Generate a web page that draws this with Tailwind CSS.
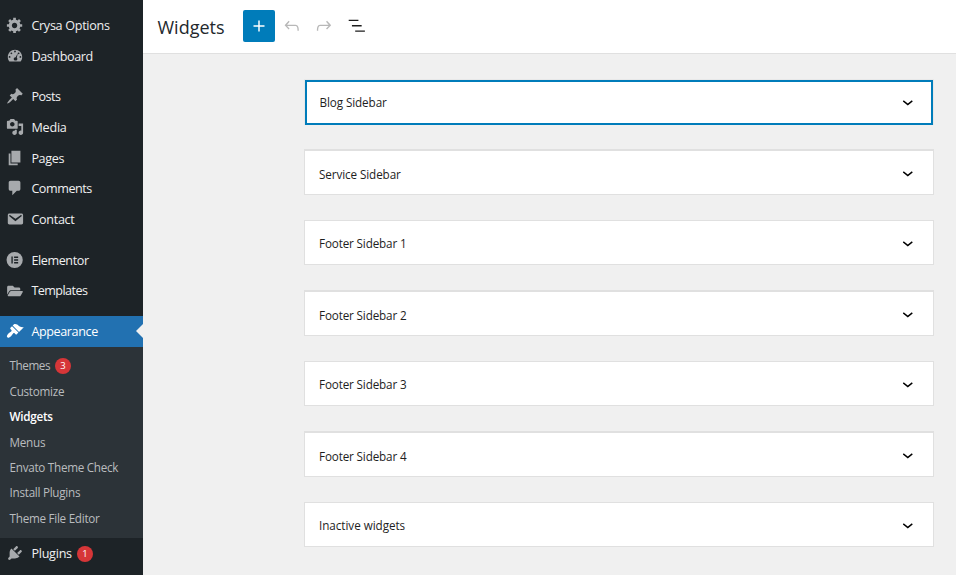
<!DOCTYPE html>
<html lang="en">
<head>
<meta charset="utf-8">
<title>Widgets</title>
<script src="https://cdn.jsdelivr.net/npm/@tailwindcss/browser@4"></script>
</head>
<body class="flex h-[575px] w-[956px] overflow-hidden bg-[#f0f0f0] font-['Open_Sans','Noto_Sans',sans-serif] text-[#1e1e1e]">
<aside class="flex h-full w-[143px] shrink-0 flex-col bg-[#1d2327] pt-[10px] text-[12.6px] tracking-[-0.35px] text-[#f0f0f1]">
  <nav class="flex flex-col">
    <a class="flex h-[31px] items-center gap-[7px] pl-[6.4px]"><svg class="mb-[2px] size-[18px] fill-[#a7aaad]" viewBox="0 0 20 20"><path d="M18 12h-2.18c-.17.7-.44 1.35-.81 1.93l1.54 1.54-2.1 2.1-1.54-1.54c-.58.36-1.23.63-1.91.79V19H8v-2.18c-.68-.16-1.33-.43-1.91-.79l-1.54 1.54-2.12-2.12 1.54-1.54c-.36-.58-.63-1.23-.79-1.91H1V9.03h2.17c.16-.7.44-1.35.8-1.94L2.43 5.55l2.1-2.1 1.54 1.54c.58-.37 1.24-.64 1.93-.81V2h3v2.18c.68.16 1.33.43 1.91.79l1.54-1.54 2.12 2.12-1.54 1.54c.36.59.64 1.24.8 1.94H18V12zm-8.5 1.5c1.66 0 3-1.34 3-3s-1.34-3-3-3-3 1.34-3 3 1.34 3 3 3z"/></svg><span class="pt-[1px] tracking-[-0.3px]">Crysa Options</span></a>
    <a class="flex h-[31px] items-center gap-[7px] pl-[6.4px]"><svg class="mb-[2px] size-[18px] fill-[#a7aaad]" viewBox="0 0 20 20"><path fill-rule="evenodd" d="M3.76 16h12.48c1.1-1.37 1.76-3.11 1.76-5 0-4.42-3.58-8-8-8s-8 3.58-8 8c0 1.89.66 3.63 1.76 5zM10 4c.55 0 1 .45 1 1s-.45 1-1 1-1-.45-1-1 .45-1 1-1zM6 6c.55 0 1 .45 1 1s-.45 1-1 1-1-.45-1-1 .45-1 1-1zm8 0c.55 0 1 .45 1 1s-.45 1-1 1-1-.45-1-1 .45-1 1-1zM4 10c.55 0 1 .45 1 1s-.45 1-1 1-1-.45-1-1 .45-1 1-1zm12 0c.55 0 1 .45 1 1s-.45 1-1 1-1-.45-1-1 .45-1 1-1zM13.2 6.6l-1.2 5.3c.4.35.6.8.6 1.3 0 1-.9 1.8-2 1.8s-2-.8-2-1.8 .9-1.9 2.1-1.8z"/></svg><span class="pt-[1px] tracking-[-0.4px]">Dashboard</span></a>
  </nav>
  <nav class="mt-[9px] flex flex-col">
    <a class="flex h-[31px] items-center gap-[7px] pl-[6.4px]"><svg class="mb-[2px] size-[18px] fill-[#a7aaad]" viewBox="0 0 20 20"><path d="M10.44 3.02l1.82-1.82 6.36 6.35-1.83 1.82c-1.05-.68-2.48-.57-3.41.36l-.75.75c-.92.93-1.04 2.35-.35 3.41l-1.83 1.82-2.41-2.41-2.8 2.79c-.42.42-3.38 2.71-3.8 2.29s1.86-3.39 2.28-3.81l2.79-2.79L4.1 9.36l1.83-1.82c1.05.69 2.48.57 3.4-.36l.75-.75c.93-.92 1.05-2.35.36-3.41z"/></svg><span class="pt-[1px] tracking-[-0.5px]">Posts</span></a>
    <a class="flex h-[31px] items-center gap-[7px] pl-[6.4px]"><svg class="mb-[2px] size-[18px] fill-[#a7aaad]" viewBox="0 0 20 20"><path fill-rule="evenodd" d="M13 11V4c0-.55-.45-1-1-1h-1.67L9 1H5L3.67 3H2c-.55 0-1 .45-1 1v7c0 .55.45 1 1 1h10c.55 0 1-.45 1-1zM7 4.5c1.38 0 2.5 1.12 2.5 2.5S8.38 9.5 7 9.5 4.5 8.38 4.5 7 5.62 4.5 7 4.5zM14 6h5v10.5c0 1.38-1.12 2.5-2.5 2.5S14 17.88 14 16.5s1.12-2.5 2.5-2.5c.17 0 .34.02.5.05V9h-3V6zm-4 8.05V13h2v3.5c0 1.38-1.12 2.5-2.5 2.5S7 17.88 7 16.5 8.12 14 9.5 14c.17 0 .34.02.5.05z"/></svg><span class="pt-[1px] tracking-[-0.2px]">Media</span></a>
    <a class="flex h-[31px] items-center gap-[7px] pl-[6.4px]"><svg class="mb-[2px] size-[18px] fill-[#a7aaad]" viewBox="0 0 20 20"><path d="M6 15V2h10v13H6zm-1 1h8v2H3V5h2v11z"/></svg><span class="pt-[1px]">Pages</span></a>
    <a class="flex h-[30px] items-center gap-[7px] pl-[6.4px]"><svg class="mb-[2px] size-[18px] fill-[#a7aaad]" viewBox="0 0 20 20"><path d="M5 2h9c1.1 0 2 .9 2 2v7c0 1.1-.9 2-2 2h-2l-5 5v-5H5c-1.1 0-2-.9-2-2V4c0-1.1.9-2 2-2z"/></svg><span class="tracking-[-0.45px]">Comments</span></a>
    <a class="flex h-[31px] items-center gap-[7px] pl-[6.4px]"><svg class="mb-[2px] size-[18px] fill-[#a7aaad]" viewBox="0 0 20 20"><path d="M3.87 4h13.25C18.37 4 19 4.59 19 5.79v8.42c0 1.19-.63 1.79-1.88 1.79H3.87c-1.25 0-1.88-.6-1.88-1.79V5.79c0-1.2.63-1.79 1.88-1.79zm6.62 8.6l6.74-5.53c.24-.2.43-.66.13-1.07-.29-.41-.82-.42-1.17-.17l-5.7 3.86L4.8 5.83c-.35-.25-.88-.24-1.17.17-.3.41-.11.87.13 1.07z"/></svg><span class="pt-[1px] tracking-[-0.3px]">Contact</span></a>
  </nav>
  <nav class="mt-[10px] flex flex-col">
    <a class="flex h-[31px] items-center gap-[7px] pl-[6.4px]"><svg class="mb-[2px] size-[18px]" viewBox="0 0 20 20"><circle cx="9.6" cy="10" r="9" fill="#a7aaad"/><path fill="#1d2327" d="M6 6.2h1.5v7.6H6zM9 6.2h4.5v1.5H9zM9 9.25h4.5v1.5H9zM9 12.3h4.5v1.5H9z"/></svg><span class="pt-[1px] tracking-[-0.4px]">Elementor</span></a>
    <a class="flex h-[30px] items-center gap-[7px] pl-[6.4px]"><span class="flex w-[18px] justify-center"><svg class="h-[14px] w-[16px] fill-[#a7aaad]" viewBox="0 0 576 512"><path d="M572.694 292.093L500.27 416.248A63.997 63.997 0 0 1 444.989 448H45.025c-18.523 0-30.064-20.093-20.731-36.093l72.424-124.155A64 64 0 0 1 152 256h399.964c18.523 0 30.064 20.093 20.73 36.093zM152 224h328v-48c0-26.51-21.49-48-48-48H272l-64-64H48C21.49 64 0 85.49 0 112v278.046l69.077-118.418C86.214 242.25 117.989 224 152 224z"/></svg></span><span class="tracking-[-0.57px]">Templates</span></a>
  </nav>
  <a class="relative mt-[10px] flex h-[31px] items-center gap-[7px] bg-[#2271b1] pl-[6.4px] text-white"><svg class="mb-[1px] size-[18px] fill-white" viewBox="0 0 20 20"><path d="M14.48 11.06L7.41 3.99l1.5-1.5c.5-.56 2.3-.47 3.51.32 1.21.8 1.43 1.28 2.91 2.1 1.18.64 2.45 1.26 4.45.85zm-.71.71L6.7 4.7 4.93 6.47c-.39.39-.39 1.02 0 1.41l1.06 1.06c.39.39.39 1.03 0 1.42-.6.6-1.43 1.11-2.21 1.69-.35.26-.7.53-1.01.84C1.43 14.23.4 16.08 1.4 17.07c.99 1 2.84-.03 4.18-1.36.31-.31.58-.66.85-1.02.57-.78 1.08-1.61 1.69-2.21.39-.39 1.02-.39 1.41 0l1.06 1.06c.39.39 1.02.39 1.41 0z"/></svg><span class="pt-[1px] tracking-[-0.4px]">Appearance</span><svg class="absolute right-0 top-[8px] h-[14px] w-[7px] fill-[#f0f0f0]" viewBox="0 0 7 14"><path d="M7 0v14L0 7z"/></svg></a>
  <div class="flex h-[191px] flex-col bg-[#2c3338] pt-[6.5px] pl-[9.6px] text-[11.7px] leading-[25.4px] tracking-[-0.28px] text-[#b9bcbf]">
    <a class="flex h-[25.4px] items-center gap-[5px]"><span class="-mt-[1px] tracking-[-0.45px]">Themes</span><span class="flex size-[16px] items-center justify-center rounded-full bg-[#d63638] text-[9.5px] leading-none tracking-normal text-white">3</span></a>
    <a class="h-[25.4px]"><span>Customize</span></a>
    <a class="h-[25.4px] font-semibold text-white"><span>Widgets</span></a>
    <a class="h-[25.4px]"><span>Menus</span></a>
    <a class="h-[25.4px]"><span>Envato Theme Check</span></a>
    <a class="h-[25.4px]"><span>Install Plugins</span></a>
    <a class="h-[25.4px]"><span>Theme File Editor</span></a>
  </div>
  <a class="flex h-[31px] items-center gap-[7px] pl-[6.4px]"><svg class="mb-[2px] size-[18px] fill-[#a7aaad]" viewBox="0 0 20 20"><path d="M13.11 4.36L9.87 7.6 8 5.73l3.24-3.24c.35-.34 1.05-.2 1.56.32.52.51.66 1.21.31 1.55zm-8 1.77l.91-1.12 9.01 9.01-1.19.84c-.71.71-2.63 1.16-3.82 1.16H6.14L4.9 17.26c-.59.59-1.54.59-2.12 0-.59-.58-.59-1.53 0-2.12l1.24-1.24v-3.88c0-1.13.4-3.19 1.09-3.89zm7.26 3.97l3.24-3.24c.34-.35 1.04-.21 1.55.31.52.51.66 1.21.31 1.55l-3.24 3.25z"/></svg><span class="pt-[1px] tracking-[-0.25px]">Plugins</span><span class="-ml-[2px] mt-[1px] flex size-[16px] items-center justify-center rounded-full bg-[#d63638] text-[9.5px] leading-none tracking-normal text-white">1</span></a>
</aside>
<main class="flex min-w-0 flex-1 flex-col">
  <header class="flex h-[54px] shrink-0 items-center border-b border-[#e0e0e0] bg-white pb-[1px] pl-[14.5px]">
    <h1 class="w-[85.5px] pt-[2px] text-[18px] tracking-[0px] whitespace-nowrap text-[#23282d]"><span>Widgets</span></h1>
    <button class="flex size-[32px] items-center justify-center rounded-[2px] bg-[#007cba]"><svg class="size-[22px] fill-white" viewBox="0 0 24 24"><path d="M18 11.2h-5.2V6h-1.6v5.2H6v1.6h5.2V18h1.6v-5.2H18z"/></svg></button>
    <div class="ml-[6px] flex items-center gap-[10.8px]">
      <svg class="size-[21.6px] fill-[#b8b8b8]" viewBox="0 0 24 24"><path d="M18.3 11.7c-.6-.6-1.4-.9-2.3-.9H6.7l2.9-3.3-1.1-1-4.5 5L8.5 16l1-1-2.7-2.7H16c.5 0 .9.2 1.3.5 1 1 1 3.4 1 4.5v.3h1.5v-.2c0-1.5 0-4.3-1.5-5.7z"/></svg>
      <svg class="size-[21.6px] fill-[#b8b8b8]" viewBox="0 0 24 24"><path d="M15.6 6.5l-1.1 1 2.9 3.3H8c-.9 0-1.7.3-2.3.9-1.4 1.5-1.4 4.2-1.4 5.6v.2h1.5v-.3c0-1.1 0-3.5 1-4.5.3-.3.7-.5 1.3-.5h9.2L14.5 15l1.1 1.1 4.6-4.6-4.6-5z"/></svg>
      <svg class="size-[21.6px] fill-[#1e1e1e]" viewBox="0 0 24 24"><path d="M13.8 5.2H3v1.5h10.8V5.2zm-3.6 12v1.5H21v-1.5H10.2zm7.2-6H6.6v1.5h10.8v-1.5z"/></svg>
    </div>
  </header>
  <div class="ml-[161px] flex w-[630px] flex-col pt-[25px] text-[11.7px] tracking-[-0.1px]">
    <section class="h-[46px] border border-b-0 border-[#e8e8e8]"><div class="flex h-[45px] items-center justify-between border-2 border-[#007cba] bg-white pr-[12px] pl-[12.5px]"><span>Blog Sidebar</span><svg class="mb-[1px] size-[21.6px]" viewBox="0 0 24 24"><path d="M17.5 11.6L12 16l-5.5-4.4.9-1.2L12 14l4.5-3.6 1 1.2z"/></svg></div></section>
    <section class="mt-[24px] flex h-[46px] items-center justify-between border border-t-2 border-[#e0e0e0] bg-white pt-[2px] pr-[14px] pl-[14px]"><span class="pt-[2px]">Service Sidebar</span><svg class="mb-[1px] size-[21.6px]" viewBox="0 0 24 24"><path d="M17.5 11.6L12 16l-5.5-4.4.9-1.2L12 14l4.5-3.6 1 1.2z"/></svg></section>
    <section class="mt-[25px] flex h-[45px] items-center justify-between border border-[#e0e0e0] bg-white pt-[1px] pr-[14px] pl-[14px]"><span class="pt-[2px] tracking-[-0.15px]">Footer Sidebar 1</span><svg class="size-[21.6px]" viewBox="0 0 24 24"><path d="M17.5 11.6L12 16l-5.5-4.4.9-1.2L12 14l4.5-3.6 1 1.2z"/></svg></section>
    <section class="mt-[25px] flex h-[46px] items-center justify-between border border-t-2 border-[#e0e0e0] bg-white pt-[2px] pr-[14px] pl-[14px]"><span class="pt-[2px] tracking-[-0.15px]">Footer Sidebar 2</span><svg class="mb-[1px] size-[21.6px]" viewBox="0 0 24 24"><path d="M17.5 11.6L12 16l-5.5-4.4.9-1.2L12 14l4.5-3.6 1 1.2z"/></svg></section>
    <section class="mt-[25px] flex h-[45px] items-center justify-between border border-[#e0e0e0] bg-white pt-[1px] pr-[14px] pl-[14px]"><span class="pt-[2px] tracking-[-0.15px]">Footer Sidebar 3</span><svg class="size-[21.6px]" viewBox="0 0 24 24"><path d="M17.5 11.6L12 16l-5.5-4.4.9-1.2L12 14l4.5-3.6 1 1.2z"/></svg></section>
    <section class="mt-[25px] flex h-[46px] items-center justify-between border border-t-2 border-[#e0e0e0] bg-white pt-[2px] pr-[14px] pl-[14px]"><span class="pt-[2px] tracking-[-0.15px]">Footer Sidebar 4</span><svg class="mb-[1px] size-[21.6px]" viewBox="0 0 24 24"><path d="M17.5 11.6L12 16l-5.5-4.4.9-1.2L12 14l4.5-3.6 1 1.2z"/></svg></section>
    <section class="mt-[25px] flex h-[45px] items-center justify-between border border-[#e0e0e0] bg-white pt-[1px] pr-[14px] pl-[14px]"><span class="pt-[2px] tracking-[-0.05px]">Inactive widgets</span><svg class="size-[21.6px]" viewBox="0 0 24 24"><path d="M17.5 11.6L12 16l-5.5-4.4.9-1.2L12 14l4.5-3.6 1 1.2z"/></svg></section>
  </div>
</main>
</body>
</html>
